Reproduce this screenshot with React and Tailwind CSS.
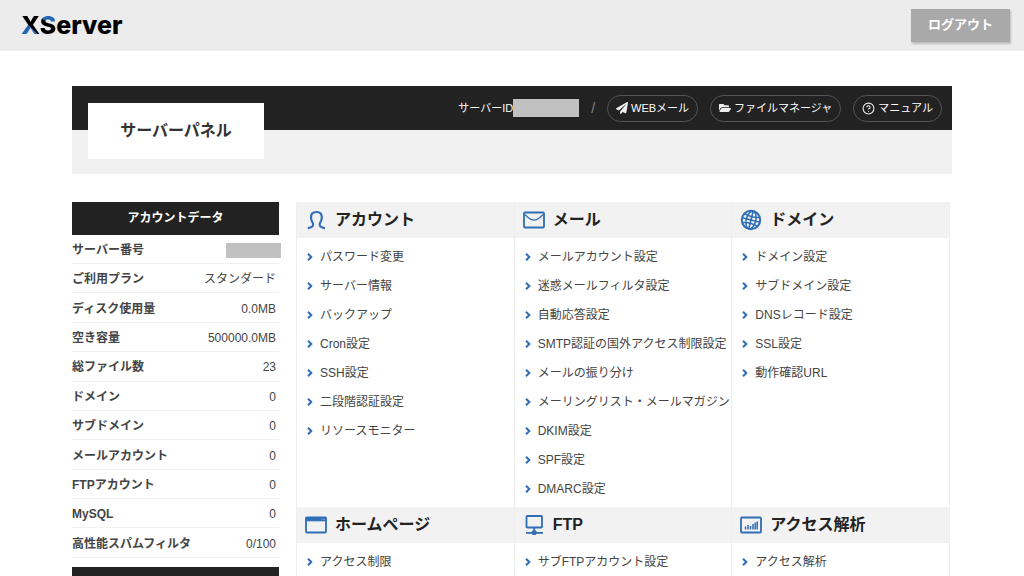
import { CircleHelp } from 'lucide-react';
import { FaFolderOpen, FaPaperPlane } from 'react-icons/fa';

const accountData = [
  ['サーバー番号', null],
  ['ご利用プラン', 'スタンダード'],
  ['ディスク使用量', '0.0MB'],
  ['空き容量', '500000.0MB'],
  ['総ファイル数', '23'],
  ['ドメイン', '0'],
  ['サブドメイン', '0'],
  ['メールアカウント', '0'],
  ['FTPアカウント', '0'],
  ['MySQL', '0'],
  ['高性能スパムフィルタ', '0/100'],
];

const sections = [
  {
    title: 'アカウント',
    icon: UserIcon,
    items: ['パスワード変更', 'サーバー情報', 'バックアップ', 'Cron設定', 'SSH設定', '二段階認証設定', 'リソースモニター'],
  },
  {
    title: 'メール',
    icon: MailIcon,
    items: [
      'メールアカウント設定',
      '迷惑メールフィルタ設定',
      '自動応答設定',
      'SMTP認証の国外アクセス制限設定',
      'メールの振り分け',
      'メーリングリスト・メールマガジン',
      'DKIM設定',
      'SPF設定',
      'DMARC設定',
    ],
  },
  {
    title: 'ドメイン',
    icon: GlobeIcon,
    items: ['ドメイン設定', 'サブドメイン設定', 'DNSレコード設定', 'SSL設定', '動作確認URL'],
  },
  { title: 'ホームページ', icon: WindowIcon, items: ['アクセス制限'] },
  { title: 'FTP', icon: NetworkIcon, items: ['サブFTPアカウント設定'] },
  { title: 'アクセス解析', icon: ChartIcon, items: ['アクセス解析'] },
];

function Icon({ children }) {
  return (
    <svg viewBox="0 0 22 22" className="h-[22px] w-[22px] shrink-0 text-[#2f6db5]" fill="none" stroke="currentColor" strokeWidth="1.8" aria-hidden="true">
      {children}
    </svg>
  );
}

function UserIcon() {
  return (
    <Icon>
      <path
        d="M2.800 19.300c2-.6 4.200-1.200 5.100-2.500.7-1.100.4-2.100-.4-3.300C6.500 12 6 10.300 6 8.200 6 4.700 8 3 11.400 3s5.400 1.700 5.400 5.200c0 2.100-.5 3.800-1.500 5.300-.8 1.200-1.100 2.200-.4 3.300.9 1.300 3.100 1.900 5.100 2.500"
        strokeWidth="2.200"
      />
    </Icon>
  );
}

function MailIcon() {
  return (
    <Icon>
      <rect x="1" y="3.500" width="20" height="15" rx="1" />
      <path d="M1.500 5.500c3 1.800 5.300 5.600 9.500 5.600s6.500-3.800 9.500-5.600" strokeWidth="1.400" />
    </Icon>
  );
}

function GlobeIcon() {
  return (
    <Icon>
      <circle cx="11" cy="11" r="9.200" strokeWidth="2" />
      <g strokeWidth="1.500" transform="rotate(14 11 11)">
        <ellipse cx="11" cy="11" rx="4.800" ry="9" />
        <path d="M11 2v18M2 11h18M3.400 6.400c4.500 1.500 10.700 1.500 15.200 0M3.400 15.600c4.500-1.500 10.700-1.500 15.200 0" />
      </g>
    </Icon>
  );
}

function WindowIcon() {
  return (
    <Icon>
      <rect x="1" y="3.500" width="20" height="15" rx="1" />
      <path d="M1 3.500h20v3.300H1z" fill="currentColor" strokeWidth="1" />
      <path d="M16.500 5.200h1M18.800 5.200h1" stroke="#b9d0ea" strokeWidth="1" />
    </Icon>
  );
}

function NetworkIcon() {
  return (
    <Icon>
      <rect x="3.500" y="2" width="15.500" height="11.500" rx="0.800" />
      <path d="M11.200 13.500v3M3 18.800h17" />
      <circle cx="11.200" cy="18.500" r="1.700" />
    </Icon>
  );
}

function ChartIcon() {
  return (
    <Icon>
      <rect x="1" y="3.500" width="20" height="15" rx="1" />
      <path d="M5.500 15.500v-3M8 15.500v-4.500M10.500 15.500v-3.500M13 15.500v-5.500M15.200 15.500v-7M17.200 15.500v-8" strokeWidth="1.500" />
    </Icon>
  );
}

function Chevron() {
  return (
    <svg viewBox="0 0 6 8" className="h-2 w-1.5 shrink-0" fill="none" stroke="#2f6db5" strokeWidth="2" aria-hidden="true">
      <path d="M1 .8 4.300 4 1 7.200" />
    </svg>
  );
}

function PillLink({ icon: PillIcon, size, children }) {
  return (
    <a
      href="#"
      className="flex h-[27px] items-center gap-[3px] rounded-full border border-[#555] px-2 text-[11px] leading-4 text-white hover:bg-[#333]"
    >
      <PillIcon size={size} className="text-[#eee]" aria-hidden="true" />
      {children}
    </a>
  );
}

function Section({ title, icon: SectionIcon, items }) {
  return (
    <section className="border-r border-[#eee]">
      <h2 className="flex h-9 items-center gap-2 bg-[#f2f2f2] pl-2 text-base font-bold text-[#222]">
        <SectionIcon />
        {title}
      </h2>
      <ul className="py-1">
        {items.map((item) => (
          <li key={item}>
            <a href="#" className="flex h-[29px] items-center gap-[7px] pl-2.5 text-xs whitespace-nowrap text-[#444] hover:underline">
              <Chevron />
              {item}
            </a>
          </li>
        ))}
      </ul>
    </section>
  );
}

export default function App() {
  return (
    <div className="min-h-screen bg-white font-['Liberation_Sans','Noto_Sans_CJK_JP',sans-serif] text-[#444]">
      <header className="flex h-[51px] items-center justify-between bg-[#ececec] pr-3.5 pl-[21px]">
        <a href="#" className="pb-0.5 font-['Inter',sans-serif] text-[25px] leading-8 font-extrabold text-black">
          <span className="bg-[linear-gradient(45deg,#2468b4_46%,#000_46%)] bg-clip-text text-transparent">X</span>
          <span className="bg-[linear-gradient(205deg,#2468b4_42%,#000_42%)] bg-clip-text text-transparent">S</span>
          erver
        </a>
        <button type="button" className="h-[33px] w-[99px] bg-[#a9a9a9] pb-0.5 text-[13px] font-bold text-white shadow-[1px_2px_2px_#bbb]">
          ログアウト
        </button>
      </header>

      <main className="mx-auto mt-[35px] max-w-[880px]">
        <div className="relative h-[88px] bg-[#f0f0f0]">
          <div className="flex h-11 items-center justify-end bg-[#222] pr-2.5 text-[11px] text-white">
            <span>サーバーID</span>
            <span className="h-[18px] w-[66px] bg-[#c1c1c1]" />
            <span className="px-3 text-sm text-[#888]">/</span>
            <nav className="flex gap-3">
              <PillLink icon={FaPaperPlane} size={12}>WEBメール</PillLink>
              <PillLink icon={FaFolderOpen} size={12}>ファイルマネージャ</PillLink>
              <PillLink icon={CircleHelp} size={13}>マニュアル</PillLink>
            </nav>
          </div>
          <h1 className="absolute top-[17px] left-4 flex h-14 w-44 items-center justify-center bg-white text-base font-bold text-[#333]">
            サーバーパネル
          </h1>
        </div>

        <div className="mt-7 flex items-start gap-[17px] pr-0.5">
          <aside className="w-[207px] shrink-0">
            <h2 className="flex h-[33px] items-center justify-center bg-[#222] pb-0.5 text-xs font-bold text-white">アカウントデータ</h2>
            <table className="h-[323px] w-full text-xs">
              <tbody>
                {accountData.map(([label, value]) => (
                  <tr key={label} className="border-b border-[#f0f0f0]">
                    <th scope="row" className="p-0 pt-0.5 text-left font-bold whitespace-nowrap">{label}</th>
                    <td className="p-0 pt-0.5 pr-[3px] text-right">
                      {value ?? <span className="-mr-[5px] ml-auto block h-[15px] w-[55px] bg-[#c1c1c1]" />}
                    </td>
                  </tr>
                ))}
              </tbody>
            </table>
            <div className="mt-[9px] h-[33px] bg-[#222]" />
          </aside>

          <div className="grid flex-1 grid-cols-3 border-l border-[#eee]">
            {sections.map((section) => (
              <Section key={section.title} {...section} />
            ))}
          </div>
        </div>
      </main>
    </div>
  );
}
